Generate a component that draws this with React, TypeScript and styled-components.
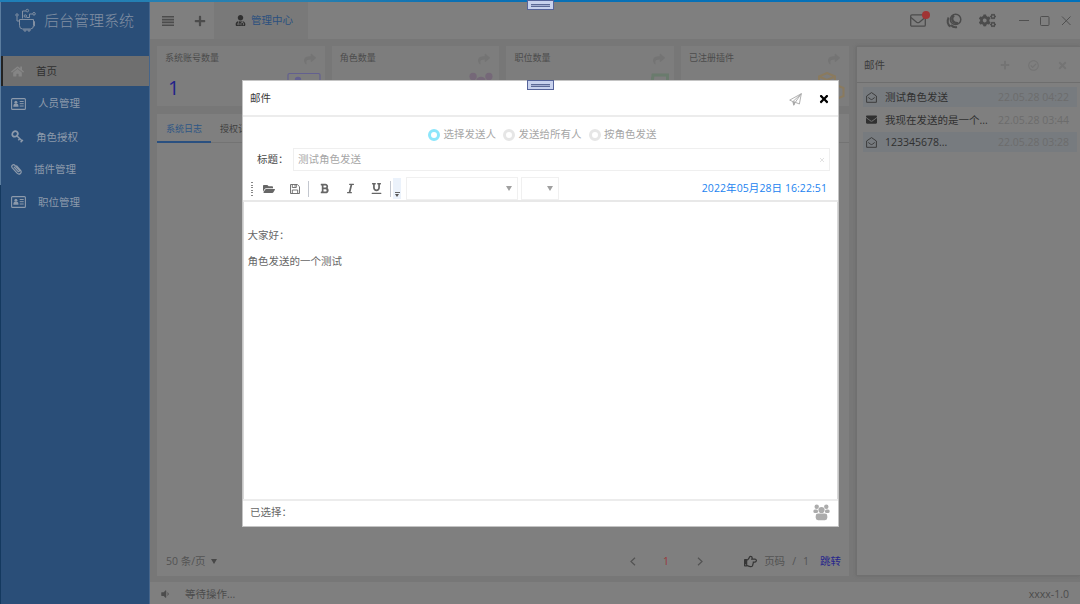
import React from "react";
import styled, { createGlobalStyle } from "styled-components";
import {
  FaHome, FaPlus, FaUserMd, FaShare, FaFolderOpen,
  FaBold, FaItalic, FaUnderline, FaTimes, FaCogs, FaEnvelope,
  FaRegCheckCircle, FaRegHandPointRight, FaVolumeDown,
} from "react-icons/fa";

const Global = createGlobalStyle`
  *, *::before { box-sizing: border-box; }
  html, body { margin: 0; padding: 0; overflow: hidden; }
  body {
    font-family: "Open Sans", "Noto Sans CJK SC", sans-serif;
    font-size: 10.5px;
    line-height: 1;
    color: #404040;
  }
  svg { display: block; flex: none; }
`;

const Screen = styled.div`
  position: relative;
  width: 1080px;
  height: 604px;
  display: flex;
  flex-direction: column;
  background: #777777;
  overflow: hidden;
`;
const TopLine = styled.div`
  height: 2px;
  flex: none;
  background: linear-gradient(90deg, #1f7fb8, #2a80ae 28%, #0a70b4 42%, #0071bb);
`;
const Body = styled.div`
  flex: 1;
  display: flex;
  min-height: 0;
`;

const Sidebar = styled.nav`
  width: 150px;
  flex: none;
  padding-left: 1px;
  background:
    linear-gradient(#5b7d9f 183px, #14395f 183px) left / 1px 100% no-repeat,
    #2a4e78;
  border-right: 1px solid #46658a;
`;
const Brand = styled.div`
  height: 54px;
  padding: 6px 0 0 14px;
  display: flex;
  align-items: flex-start;
  gap: 6px;
  color: #8290a3;
`;
const BrandName = styled.span`
  font-size: 15px;
  line-height: 25px;
  font-weight: 300;
  white-space: nowrap;
`;
const NavItem = styled.div<{ $active?: boolean; $h: number }>`
  height: ${(p) => p.$h}px;
  padding-left: ${(p) => (p.$active ? 8 : 10)}px;
  display: flex;
  align-items: center;
  gap: 12px;
  color: ${(p) => (p.$active ? "#303030" : "#8d9aab")};
  background: ${(p) => (p.$active ? "#6f6f6f" : "transparent")};
  border-left: ${(p) => (p.$active ? "2px solid #222" : "0")};
`;

const Content = styled.div`
  flex: 1;
  display: flex;
  flex-direction: column;
  min-width: 0;
`;
const Header = styled.header`
  height: 37px;
  flex: none;
  display: flex;
  align-items: center;
  background: #7f7f7f;
  color: #4c4c4c;
`;
const HeaderButton = styled.div<{ $w: number }>`
  width: ${(p) => p.$w}px;
  display: flex;
  justify-content: center;
`;
const HeaderTab = styled.div`
  width: 94px;
  height: 37px;
  display: flex;
  align-items: center;
  justify-content: center;
  gap: 5px;
  padding-left: 6px;
  background: #797979;
  color: #2b507f;
`;
const HeaderActions = styled.div`
  margin-left: auto;
  padding-right: 9px;
  display: flex;
  align-items: center;
`;
const Slot = styled.div<{ $ml: number }>`
  position: relative;
  margin-left: ${(p) => p.$ml}px;
`;
const Dot = styled.i`
  position: absolute;
  top: -3px;
  right: -4px;
  width: 8px;
  height: 8px;
  border-radius: 50%;
  background: #a03434;
`;

const Work = styled.div`
  flex: 1;
  display: flex;
  padding: 7px 0 6px 7px;
  gap: 7px;
  min-height: 0;
`;
const Center = styled.main`
  width: 692px;
  display: flex;
  flex-direction: column;
  gap: 8px;
`;
const Cards = styled.div`
  display: grid;
  grid-template-columns: repeat(4, 167.5px);
  gap: 7.2px;
`;
const Card = styled.section`
  height: 60px;
  padding: 7px 4px 7px 8px;
  background: #7d7d7d;
  overflow: hidden;
`;
const CardTop = styled.div`
  display: flex;
  justify-content: space-between;
  padding-right: 5px;
  font-size: 9px;
  line-height: 10px;
  color: #4c4c4c;
`;
const CardBottom = styled.div`
  display: flex;
  justify-content: space-between;
  align-items: flex-start;
  height: 36px;
  padding: 7px 0 0 3px;
`;
const Count = styled.b`
  font-size: 20px;
  line-height: 32px;
  font-weight: 400;
  color: #22228a;
`;

const Panel = styled.section`
  flex: 1;
  display: flex;
  flex-direction: column;
  justify-content: space-between;
  background: #7f7f7f;
`;
const Tabs = styled.div`
  height: 29px;
  display: flex;
  border-bottom: 1px solid #737373;
`;
const Tab = styled.div<{ $on?: boolean }>`
  height: 29px;
  padding: 0 9px;
  line-height: 30px;
  font-size: 9px;
  white-space: nowrap;
  color: ${(p) => (p.$on ? "#2d5685" : "#404040")};
  border-bottom: ${(p) => (p.$on ? "2px solid #2a5080" : "0")};
`;
const Pager = styled.div`
  height: 30px;
  display: flex;
  align-items: center;
  padding: 0 8px 0 9px;
  color: #535353;
`;
const Push = styled.span<{ $ml?: number; $c?: string }>`
  margin-left: ${(p) => (p.$ml === undefined ? "auto" : `${p.$ml}px`)};
  color: ${(p) => p.$c ?? "inherit"};
  white-space: nowrap;
`;
const Caret = styled.i<{ $c?: string; $s?: number }>`
  display: block;
  width: 0;
  height: 0;
  border: ${(p) => p.$s ?? 3.5}px solid transparent;
  border-top: ${(p) => (p.$s ?? 3.5) + 1.5}px solid ${(p) => p.$c ?? "#484848"};
  border-bottom: 0;
`;

const MailPanel = styled.aside`
  flex: 1;
  background: #7f7f7f;
  border: 1px solid #707070;
  border-width: 1px 0 1px 1px;
  box-shadow: 0 0 3px #6a6a6a;
`;
const MailHead = styled.div`
  height: 36px;
  padding: 1px 12px 0 7px;
  display: flex;
  align-items: center;
  color: #3c3c3c;
  border-bottom: 1px solid #6e6e6e;
`;
const MailTools = styled.div`
  margin-left: auto;
  display: flex;
  align-items: center;
  gap: 18px;
  color: #747474;
`;
const MailList = styled.div`
  padding: 4px 3px 0 6px;
`;
const MailRow = styled.div<{ $tint?: boolean }>`
  height: 20.3px;
  margin-bottom: 2px;
  padding: 1px 8px 0 3px;
  display: flex;
  align-items: center;
  gap: 8px;
  background: ${(p) => (p.$tint ? "#777b7f" : "transparent")};
  color: #303030;
  white-space: nowrap;
`;
const MailTime = styled.time`
  margin-left: auto;
  color: #6c6c6c;
`;

const Status = styled.footer`
  height: 22px;
  flex: none;
  display: flex;
  align-items: center;
  padding: 2px 11px 0 10px;
  background: #7f7f7f;
  color: #4c4c4c;
`;

const Grip = styled.div<{ $top: number }>`
  position: absolute;
  left: 527px;
  top: ${(p) => p.$top}px;
  width: 27px;
  height: 10px;
  padding: 3px 3px 0;
  background: #c8d2ee;
  border: 1px solid #56649a;
  &::before {
    content: "";
    display: block;
    height: 3px;
    border: 1px solid #5c6a96;
    border-width: 1px 0;
    background: #a3add0;
  }
`;

const Dialog = styled.section`
  position: absolute;
  left: 242px;
  top: 80px;
  width: 597px;
  height: 447px;
  display: flex;
  flex-direction: column;
  background: #fff;
  border: 1px solid #c4c4c4;
  color: #666;
`;
const DialogHead = styled.div`
  height: 36px;
  padding: 0 8px 0 7px;
  display: flex;
  align-items: center;
  color: #3a3a3a;
  border-bottom: 2px solid #ececec;
`;
const DialogTools = styled.div`
  margin-left: auto;
  padding-top: 2px;
  display: flex;
  align-items: center;
  gap: 16px;
`;
const Radios = styled.div`
  height: 31px;
  padding: 4px 0 0 185px;
  display: flex;
  align-items: center;
  color: #a6a6a6;
`;
const Radio = styled.label<{ $on?: boolean }>`
  display: flex;
  align-items: center;
  gap: 3.5px;
  margin-right: 7px;
  white-space: nowrap;
  &::before {
    content: "";
    width: 12px;
    height: 12px;
    border-radius: 50%;
    border: 3px solid ${(p) => (p.$on ? "#8ce6fb" : "#e6e6e6")};
  }
`;
const TitleRow = styled.div`
  height: 23px;
  padding: 0 8px 0 14px;
  display: flex;
  align-items: center;
  color: #484848;
`;
const Field = styled.div`
  width: 537px;
  height: 23px;
  margin-left: auto;
  padding: 0 4px;
  display: flex;
  align-items: center;
  justify-content: space-between;
  border: 1px solid #efefef;
  color: #a6a6a6;
`;
const Toolbar = styled.div`
  height: 31px;
  padding: 6px 11px 0 8px;
  display: flex;
  align-items: center;
  color: #666;
  border-bottom: 2px solid #e8e8e8;
`;
const Drag = styled.i`
  width: 2px;
  height: 14px;
  background: repeating-linear-gradient(#888 0 1px, transparent 1px 2.5px);
`;
const Rule = styled.i<{ $ml: number }>`
  width: 1px;
  height: 16px;
  margin-left: ${(p) => p.$ml}px;
  background: #c3c7cf;
`;
const Overflow = styled.div`
  width: 8px;
  height: 21px;
  margin-left: 2px;
  padding-bottom: 2px;
  display: flex;
  flex-direction: column;
  align-items: center;
  justify-content: flex-end;
  gap: 1px;
  background: #ebf2fb;
  &::before { content: ""; width: 5px; height: 1px; background: #666; }
`;
const Select = styled.div<{ $w: number; $ml: number }>`
  width: ${(p) => p.$w}px;
  height: 23px;
  margin-left: ${(p) => p.$ml}px;
  padding-right: 5px;
  display: flex;
  align-items: center;
  justify-content: flex-end;
  border: 1px solid #f0f0f0;
`;
const Clock = styled.time`
  margin-left: auto;
  color: #2283f0;
  letter-spacing: 0.07px;
  white-space: nowrap;
`;
const Editor = styled.div`
  flex: 1;
  padding: 20px 3.5px;
  border-left: 1px solid #d8d8d8;
  border-right: 1px solid #d8d8d8;
  p { margin: 0; line-height: 26px; }
`;
const DialogFoot = styled.div`
  height: 27px;
  padding: 0 8px 3px 7px;
  display: flex;
  align-items: center;
  justify-content: space-between;
  border-top: 2px solid #ececec;
`;

const Logo = () => (
  <svg width="23" height="24" viewBox="0 0 23 24" fill="none" stroke="currentColor" strokeWidth="1">
    <path d="M7.500 10.500V3h3.500M11.500 9.500h3V6h3M2 8.500V13h2.500" />
    <path d="M4.500 11.500h14v6q0 3.500-3 3.500h-8q-3 0-3-3.500z" />
    <path d="M18.500 13.500h1v4.500h-1M9 21v2h2v-2M13 21v2h2v-2" />
    <circle cx="12.300" cy="2.600" r="1.300" /><circle cx="19" cy="5.800" r="1.300" />
    <circle cx="2" cy="7" r="1.200" /><circle cx="10.300" cy="8" r="1.200" />
  </svg>
);
const MenuIcon = () => (
  <svg width="12" height="10" viewBox="0 0 12 10" fill="currentColor">
    <path d="M0 0h12v1.600H0zM0 2.800h12v1.600H0zM0 5.600h12v1.600H0zM0 8.400h12V10H0z" />
  </svg>
);
const IdCardIcon = () => (
  <svg width="15" height="12" viewBox="0 0 15 12" fill="none" stroke="currentColor">
    <rect x=".6" y=".6" width="13.800" height="10.800" rx="1" strokeWidth="1.100" />
    <circle cx="4.900" cy="4.200" r="1.500" fill="currentColor" stroke="none" />
    <path d="M2.300 8.800q0-3 1.500-3h2.200q1.500 0 1.500 3z" fill="currentColor" stroke="none" />
    <path d="M8.700 3.500h4M8.700 5.700h4M8.700 8h4" />
  </svg>
);
const KeyIcon = () => (
  <svg width="13" height="13" viewBox="0 0 13 13" fill="none" stroke="currentColor">
    <ellipse cx="4" cy="4" rx="2.900" ry="2.500" strokeWidth="1.800" transform="rotate(-45 4 4)" />
    <path d="m6 6 5 4.800M7.300 10.300l2-2M9.600 12.300l2.300-2.300" strokeWidth="1.500" />
  </svg>
);
const ClipIcon = () => (
  <svg width="11" height="12" viewBox="0 0 11 12" fill="none" stroke="currentColor" strokeWidth="1.200" strokeLinecap="round">
    <path d="M3.200 4.200 7 8.300c.8.900 2-.2 1.200-1.100L4 2.500C2.300.7-.4 2.800 1.300 4.900l4.800 5.300c2.300 2.300 5.400-.6 3.300-3L5.700 3" />
  </svg>
);
const MailIcon = () => (
  <svg width="16" height="13" viewBox="0 0 16 13" fill="none" stroke="currentColor" strokeWidth="1.300">
    <rect x=".7" y=".9" width="14.600" height="11.300" rx="1.200" />
    <path d="m1 3.500 5.600 4.700q1.400 1 2.800 0L15 3.500" />
  </svg>
);
const OpenMailIcon = () => (
  <svg width="11" height="11" viewBox="0 0 11 11" fill="none" stroke="#3c3c3c" strokeWidth="1" strokeLinejoin="round">
    <path d="M.6 4 5.500.6 10.400 4v6.300H.6z" />
    <path d="m2.300 5.500 2.400 1.800q.8.500 1.600 0l2.400-1.800" />
  </svg>
);
const SaveIcon = () => (
  <svg width="10" height="10" viewBox="0 0 10 10" fill="none" stroke="currentColor" strokeWidth=".9">
    <path d="M.5.5h6.800l2.200 2.200v6.800h-9zM2.300.5v3h4v-3M2.300 9.500V6h5.400v3.500M5 1v1.700" />
  </svg>
);
const GroupIcon = ({ size = 17, color = "#acacac" }: { size?: number; color?: string }) => (
  <svg width={size} height={size} viewBox="0 0 17 17" fill={color}>
    <circle cx="3.700" cy="2.700" r="2.200" /><circle cx="13.300" cy="2.700" r="2.200" />
    <rect x="0.400" y="5.400" width="4.600" height="3.500" rx="1.500" />
    <rect x="12" y="5.400" width="4.600" height="3.500" rx="1.500" />
    <circle cx="8.500" cy="6" r="3.100" />
    <rect x="2.700" y="9.600" width="11.600" height="6.600" rx="2.400" />
  </svg>
);
const PlaneIcon = () => (
  <svg width="13" height="13" viewBox="0 0 13 13" fill="none" stroke="#a8a8a8" strokeWidth="0.900" strokeLinejoin="round">
    <path d="M12.300.7.700 7.100l3.200 1.500L12.300.7 10.400 11 6.300 9.300 12.300.7M3.900 8.600l.8 3.700 1.600-3" />
    <path d="m4.200 8.700.6 3.200 1.400-2.800z" fill="#a8a8a8" />
  </svg>
);
const SkinIcon = () => (
  <svg width="16" height="16" viewBox="0 0 16 16" fill="none" stroke="currentColor">
    <circle cx="9.600" cy="6.400" r="5.200" strokeWidth="1.500" />
    <path d="M8 2.500C4.500 5.500 6.500 10.500 12 10.200" strokeWidth="2.200" />
    <path d="M2.600 4.500C.8 8 1.500 12 4.500 13.500M5 12c1.500 1.800 4 2.400 6 2" strokeWidth="2" />
  </svg>
);
const Chevron = ({ flip }: { flip?: boolean }) => (
  <svg width="6" height="9" viewBox="0 0 6 9" fill="none" stroke="currentColor" strokeWidth="1.200">
    <path d={flip ? "m1 .8 4 3.700-4 3.700" : "M5 .8 1 4.500l4 3.700"} />
  </svg>
);
const CardBadge = () => (
  <svg width="34" height="26" viewBox="0 0 34 26" fill="none" stroke="#63608f" strokeWidth="1.200">
    <rect x="1" y="1.500" width="32" height="23" rx="1.500" />
    <circle cx="11" cy="8" r="2.600" fill="#63608f" /><path d="M19 9h9M19 13h9" />
  </svg>
);
const BookBadge = () => (
  <svg width="21" height="26" viewBox="0 0 21 26" fill="none" stroke="#6a7b6d" strokeWidth="3">
    <path d="M4 3h14.500v20H1.500z" /><path d="M6 9h10" strokeWidth="1.500" />
  </svg>
);
const CubesBadge = () => (
  <svg width="28" height="30" viewBox="0 0 28 30" fill="none" stroke="#8a7a5e" strokeWidth="2">
    <path d="m10 1 8 3.500v8L10 16l-8-3.500v-8zM2 4.500 10 8l8-3.500M19 13l7.500 3v8L19 27" />
  </svg>
);

const cards: { name: string; count?: string; icon: React.ReactNode }[] = [
  { name: "系统账号数量", count: "1", icon: <CardBadge /> },
  { name: "角色数量", icon: <GroupIcon size={28} color="#756878" /> },
  { name: "职位数量", icon: <BookBadge /> },
  { name: "已注册插件", icon: <CubesBadge /> },
];

export default function App() {
  return (
    <Screen>
      <Global />
      <TopLine />
      <Body>
        <Sidebar>
          <Brand><Logo /><BrandName>后台管理系统</BrandName></Brand>
          <NavItem $active $h={30}><FaHome size={13} color="#858585" /><span>首页</span></NavItem>
          <NavItem $h={35}><IdCardIcon /><span>人员管理</span></NavItem>
          <NavItem $h={31.5}><KeyIcon /><span>角色授权</span></NavItem>
          <NavItem $h={33.5}><ClipIcon /><span>插件管理</span></NavItem>
          <NavItem $h={32}><IdCardIcon /><span>职位管理</span></NavItem>
        </Sidebar>
        <Content>
          <Header>
            <HeaderButton $w={35}><MenuIcon /></HeaderButton>
            <HeaderButton $w={29}><FaPlus size={12} /></HeaderButton>
            <HeaderTab><FaUserMd size={11} color="#303030" /><span>管理中心</span></HeaderTab>
            <HeaderActions>
              <Slot $ml={0}><MailIcon /><Dot /></Slot>
              <Slot $ml={20}><SkinIcon /></Slot>
              <Slot $ml={17}><FaCogs size={17} /></Slot>
              <Slot $ml={22}>
                <svg width="53" height="12" viewBox="0 0 53 12" fill="none" stroke="#505050">
                  <path d="M1 5.500h10M44 1.500l8.500 8.500M52.500 1.500 44 10" />
                  <rect x="22.500" y="1.500" width="8.500" height="9" rx="1" />
                </svg>
              </Slot>
            </HeaderActions>
          </Header>
          <Work>
            <Center>
              <Cards>
                {cards.map((c) => (
                  <Card key={c.name}>
                    <CardTop><span>{c.name}</span><FaShare size={12} color="#747474" /></CardTop>
                    <CardBottom><Count>{c.count}</Count>{c.icon}</CardBottom>
                  </Card>
                ))}
              </Cards>
              <Panel>
                <Tabs><Tab $on>系统日志</Tab><Tab>授权记录</Tab></Tabs>
                <Pager>
                  <span>50 条/页</span><Push $ml={5}><Caret /></Push>
                  <Push><Chevron /></Push>
                  <Push $ml={27} $c="#9a3838">1</Push>
                  <Push $ml={28}><Chevron flip /></Push>
                  <Push $ml={41} $c="#363636"><FaRegHandPointRight size={13} /></Push>
                  <Push $ml={7}>页码</Push>
                  <Push $ml={7}>/</Push>
                  <Push $ml={7}>1</Push>
                  <Push $ml={11} $c="#26268c">跳转</Push>
                </Pager>
              </Panel>
            </Center>
            <MailPanel>
              <MailHead>
                <span>邮件</span>
                <MailTools><FaPlus size={10} /><FaRegCheckCircle size={11} /><FaTimes size={11} /></MailTools>
              </MailHead>
              <MailList>
                <MailRow $tint><OpenMailIcon /><span>测试角色发送</span><MailTime>22.05.28 04:22</MailTime></MailRow>
                <MailRow><FaEnvelope size={11} /><span>我现在发送的是一个...</span><MailTime>22.05.28 03:44</MailTime></MailRow>
                <MailRow $tint><OpenMailIcon /><span>123345678...</span><MailTime>22.05.28 03:28</MailTime></MailRow>
              </MailList>
            </MailPanel>
          </Work>
          <Status>
            <FaVolumeDown size={10} />
            <Push $ml={15}>等待操作...</Push>
            <Push>xxxx-1.0</Push>
          </Status>
        </Content>
      </Body>
      <Dialog>
        <DialogHead>
          <span>邮件</span>
          <DialogTools><PlaneIcon /><FaTimes size={12} color="#000" /></DialogTools>
        </DialogHead>
        <Radios>
          <Radio $on>选择发送人</Radio><Radio>发送给所有人</Radio><Radio>按角色发送</Radio>
        </Radios>
        <TitleRow>
          <span>标题：</span>
          <Field>
            <span>测试角色发送</span>
            <svg width="6" height="6" viewBox="0 0 6 6" stroke="#e2e2e2"><path d="m1 1 4 4M5 1 1 5" /></svg>
          </Field>
        </TitleRow>
        <Toolbar>
          <Drag />
          <Push $ml={10}><FaFolderOpen size={12} /></Push>
          <Push $ml={15}><SaveIcon /></Push>
          <Rule $ml={8} />
          <Push $ml={10}><FaBold size={11} /></Push>
          <Push $ml={15}><FaItalic size={11} /></Push>
          <Push $ml={15}><FaUnderline size={11} /></Push>
          <Rule $ml={8} />
          <Overflow><Caret $s={2} $c="#555" /></Overflow>
          <Select $w={112} $ml={5}><Caret $c="#a0a0a0" /></Select>
          <Select $w={38} $ml={3}><Caret $c="#a0a0a0" /></Select>
          <Clock>2022年05月28日 16:22:51</Clock>
        </Toolbar>
        <Editor><p>大家好：</p><p>角色发送的一个测试</p></Editor>
        <DialogFoot><span>已选择：</span><GroupIcon /></DialogFoot>
      </Dialog>
      <Grip $top={0} />
      <Grip $top={80} />
    </Screen>
  );
}
